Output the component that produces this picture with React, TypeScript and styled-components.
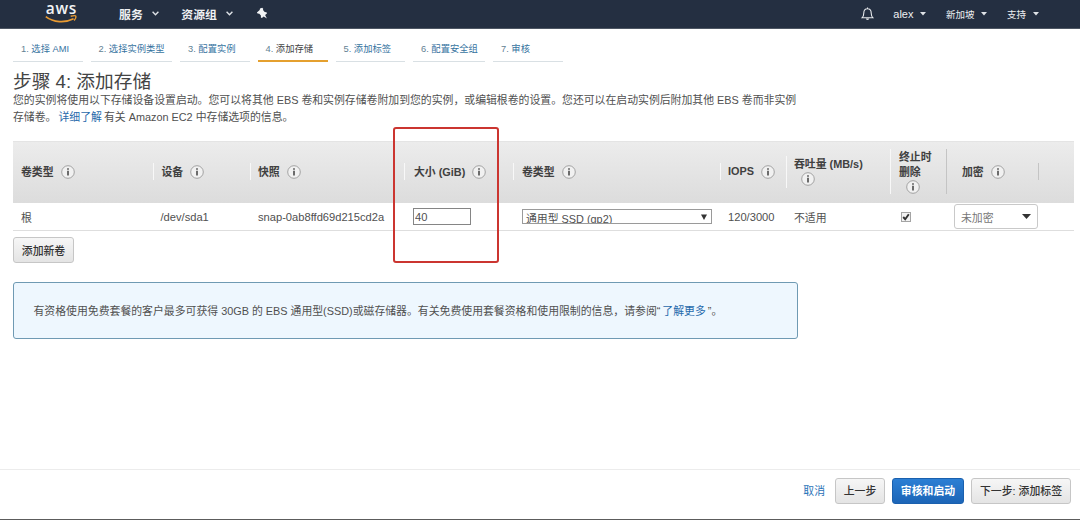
import React from "react";
import styled, { createGlobalStyle, css } from "styled-components";

const GlobalStyle = createGlobalStyle`
  * { box-sizing: border-box; }
  html, body { margin: 0; background: #fff; }
  body {
    font-family: "Liberation Sans", "Noto Sans CJK SC", sans-serif;
    font-size: 10.86px;
    color: #505050;
  }
`;

const Page = styled.div`
  display: flex;
  flex-direction: column;
  width: 1080px;
  height: 520px;
  overflow: hidden;
  border-bottom: 1px solid #5c5c5c;
`;

const TopBar = styled.header`
  display: flex;
  flex: none;
  height: 29px;
  padding: 0 41px 0 45px;
  background: #242f41;
  border-bottom: 1px solid #4d5663;
  color: #eef0f2;
`;

const Logo = styled.svg`
  flex: none;
  width: 34px;
  height: 25px;
  margin-right: 40px;
  overflow: visible;
  font: 600 15.5px "Open Sans", "Noto Sans", sans-serif;
`;

const MainMenu = styled.nav`
  display: flex;
  align-items: center;
  gap: 22px;
  height: 26px;
  font-size: 11.9px;
  font-weight: 700;
`;

const MenuItem = styled.span<{ $gap: number }>`
  display: flex;
  align-items: center;
  gap: ${(p) => p.$gap}px;
  white-space: nowrap;
`;

const AccountMenu = styled.nav`
  display: flex;
  align-items: center;
  gap: 19.5px;
  height: 28px;
  margin-left: auto;
  font-size: 9.5px;
`;

const Latin = styled.span`
  font-size: 11px;
`;

const Steps = styled.nav`
  display: flex;
  flex: none;
  gap: 8px;
  height: 33px;
  padding-left: 13px;
`;

const Step = styled.span<{ $width: number; $active?: boolean }>`
  width: ${(p) => p.$width}px;
  padding: 12px 0 0 8px;
  border-bottom: 1px solid #d9e0e4;
  font-size: 9.3px;
  line-height: 17px;
  color: #37749f;
  white-space: nowrap;
  ${(p) =>
    p.$active &&
    css`
      border-bottom: 2px solid #e5a02f;
      color: #444;
    `}
`;

const StepNumber = styled.span`
  color: #628193;
`;

const Title = styled.h1`
  flex: none;
  height: 30px;
  margin: 0;
  padding: 8px 0 0 13px;
  font-size: 18.7px;
  font-weight: 400;
  line-height: 24px;
  color: #444;
  white-space: nowrap;
`;

const Intro = styled.p`
  flex: none;
  height: 49px;
  margin: 0;
  padding-left: 13px;
  line-height: 16.5px;
  white-space: nowrap;
`;

const Link = styled.a`
  color: #1f69ab;
`;

const IntroLink = styled(Link)`
  margin: 0 -1px;
`;

const Table = styled.section`
  flex: none;
  width: 1061px;
  margin-left: 13px;
`;

const gridColumns = css`
  display: grid;
  grid-template-columns: 139.5px 97px 154.5px 109px 207px 66px 104px 56px 92px 36px;
`;

const HeaderRow = styled.div`
  ${gridColumns}
  align-items: center;
  height: 62px;
  padding-bottom: 2px;
  background: linear-gradient(#ececec, #dcdcdc);
  border-top: 1px solid #e4e4e4;
  font-weight: 700;
  color: #404040;
`;

const HeaderCell = styled.div<{ $height?: number; $inset?: number; $line?: string }>`
  display: flex;
  align-items: center;
  height: ${(p) => p.$height ?? 17}px;
  padding-left: ${(p) => p.$inset ?? 8}px;
  border-left: 1px solid ${(p) => p.$line ?? "#f8f8f8"};
  white-space: nowrap;
`;

const Label = styled.span`
  margin-right: 7px;
  padding-bottom: 1px;
`;

const Stack = styled.div<{ $shift: number }>`
  display: flex;
  flex-direction: column;
  line-height: 15px;
  svg { margin-left: ${(p) => p.$shift}px; }
`;

const BodyRow = styled.div`
  ${gridColumns}
  height: 28px;
  border-bottom: 1px solid #dedede;
`;

const Cell = styled.div<{ $inset?: number }>`
  display: flex;
  align-items: center;
  padding-left: ${(p) => p.$inset ?? 8}px;
  white-space: nowrap;
`;

const CellText = styled.span`
  font-size: 11.15px;
`;

const SizeInput = styled.input`
  width: 58px;
  height: 17px;
  padding: 0 1px;
  border: 1px solid #858585;
  border-radius: 0;
  font: inherit;
  font-size: 11.15px;
  color: #505050;
  background: #fff;
`;

const TypeSelect = styled.div`
  display: flex;
  justify-content: space-between;
  width: 190px;
  height: 15.5px;
  padding: 0 4px 0 3px;
  border: 1px solid #9a9a9a;
  line-height: 19px;
  overflow: hidden;
`;

const TypeArrow = styled.svg`
  margin-top: 4px;
`;

const EncryptSelect = styled.div`
  display: flex;
  align-items: center;
  justify-content: space-between;
  width: 85px;
  height: 25px;
  padding: 0 6px 0 6px;
  border: 1px solid #c9c9c9;
  border-radius: 3px;
  color: #777;
  background: #fff;
`;

const Button = styled.button<{ $width: number; $primary?: boolean }>`
  width: ${(p) => p.$width}px;
  height: 26px;
  padding: 0 0 1px;
  border: 1px solid #c6c6c6;
  border-radius: 3px;
  background: linear-gradient(#f6f6f6, #e4e4e4);
  font: inherit;
  font-weight: 500;
  color: #333;
  white-space: nowrap;
  ${(p) =>
    p.$primary &&
    css`
      border-color: #1a60ae;
      background: linear-gradient(#2c7fd4, #1c65b7);
      font-weight: 700;
      color: #fff;
    `}
`;

const AddVolume = styled.div`
  flex: none;
  padding: 6px 0 0 13px;
`;

const Notice = styled.aside`
  display: flex;
  flex: none;
  align-items: center;
  width: 785px;
  height: 57px;
  margin: 19px 0 0 13px;
  padding: 0 0 1px 19.5px;
  border: 1px solid #6f9ab3;
  border-radius: 3px;
  background: #eef7fe;
  white-space: pre;
`;

const QuotedLink = styled(Link)`
  margin: 0 2px 0 2px;
`;

const Footer = styled.footer`
  display: flex;
  align-items: center;
  justify-content: flex-end;
  gap: 7px;
  height: 50px;
  margin-top: auto;
  padding: 0 9px 8px 0;
  border-top: 1px solid #ececec;
`;

const Cancel = styled(Link)`
  margin-right: 3px;
  padding-bottom: 1px;
  color: #2a73b8;
`;

const HighlightFrame = styled.div`
  position: absolute;
  left: 393px;
  top: 127px;
  width: 106px;
  height: 136px;
  border: 2px solid #cb3530;
  border-radius: 3px;
`;

const Chevron = () => (
  <svg width="7" height="5" viewBox="0 0 7 5" fill="none" stroke="#dfe3e7" strokeWidth="1.4">
    <path d="M.6.8 3.5 3.7 6.4.8" />
  </svg>
);

const Caret = ({ width = 6, height = 3.5, color = "#dfe3e7" }) => (
  <svg width={width} height={height} viewBox="0 0 10 5" preserveAspectRatio="none" fill={color}>
    <path d="M0 0h10L5 5z" />
  </svg>
);

const Info = () => (
  <svg width="14" height="14" viewBox="0 0 14 14" fill="none">
    <circle cx="7" cy="7" r="6.3" fill="#f1f1f1" stroke="#909090" strokeWidth=".8" />
    <path d="M7 3.3v1.4M7 5.7v4.7" stroke="#333" strokeWidth="1.4" />
  </svg>
);

const steps = [
  { name: "选择 AMI", width: 69.5 },
  { name: "选择实例类型", width: 81.5 },
  { name: "配置实例", width: 69.5 },
  { name: "添加存储", width: 70, active: true },
  { name: "添加标签", width: 69.5 },
  { name: "配置安全组", width: 72 },
  { name: "审核", width: 70 },
];

export default function App() {
  return (
    <Page>
      <GlobalStyle />
      <TopBar>
        <Logo viewBox="0 0 34 25" fill="none" stroke="#e89a32">
          <text x=".8" y="13.5" textLength="30.5" fill="#f1f3f5" stroke="none">aws</text>
          <path d="M.8 16.6C8.5 22.6 20 23.2 28.6 18.8" strokeWidth="1.7" />
          <path d="M25.7 16.3c3-.8 5-.6 5.2 0 .2.7-.5 2.9-1.7 4.2" strokeWidth="1.4" />
        </Logo>
        <MainMenu>
          <MenuItem $gap={9.5}>服务<Chevron /></MenuItem>
          <MenuItem $gap={9.5}>资源组<Chevron /></MenuItem>
          <svg width="14" height="13" viewBox="0 0 14 13" fill="#f1f3f5">
            <path d="M5 1.5 7.200.8l1 .9-.2 1.400 1.700 1.900 1.700.2.700 1.100-2 1.800 1.800 3.400-3.200-2-1.800 1.600-1-.6V8.600L4.300 6.700l-1.700-.2-.7-1.100L4.700 3z" />
          </svg>
        </MainMenu>
        <AccountMenu>
          <svg width="13" height="14" viewBox="0 0 13 14" fill="none" stroke="#e6e9ec" strokeWidth="1.1">
            <path d="M6.5.5v1.3M1 10.8c1.5-1.3 1.8-2.3 1.8-4.8 0-2.7 1.4-4.2 3.7-4.2s3.7 1.5 3.7 4.2c0 2.5.3 3.5 1.8 4.8z" />
            <path d="M4.9 11.5c.1 1 .7 1.4 1.6 1.4s1.5-.4 1.6-1.4z" fill="#e6e9ec" stroke="none" />
          </svg>
          <MenuItem $gap={7}><Latin>alex</Latin><Caret /></MenuItem>
          <MenuItem $gap={7}>新加坡<Caret /></MenuItem>
          <MenuItem $gap={7}>支持<Caret /></MenuItem>
        </AccountMenu>
      </TopBar>
      <Steps>
        {steps.map((step, i) => (
          <Step key={step.name} $width={step.width} $active={step.active}>
            <StepNumber>{i + 1}.</StepNumber> {step.name}
          </Step>
        ))}
      </Steps>
      <Title>步骤 4: 添加存储</Title>
      <Intro>
        您的实例将使用以下存储设备设置启动。您可以将其他 EBS 卷和实例存储卷附加到您的实例，或编辑根卷的设置。您还可以在启动实例后附加其他 EBS 卷而非实例
        <br />
        存储卷。 <IntroLink>详细了解</IntroLink> 有关 Amazon EC2 中存储选项的信息。
      </Intro>
      <Table>
        <HeaderRow>
          <HeaderCell $line="transparent" $inset={7}><Label>卷类型</Label><Info /></HeaderCell>
          <HeaderCell><Label>设备</Label><Info /></HeaderCell>
          <HeaderCell $inset={7.5}><Label>快照</Label><Info /></HeaderCell>
          <HeaderCell $inset={9}><Label>大小 (GiB)</Label><Info /></HeaderCell>
          <HeaderCell><Label>卷类型</Label><Info /></HeaderCell>
          <HeaderCell $inset={7}><Label>IOPS</Label><Info /></HeaderCell>
          <HeaderCell $height={32} $inset={7}>
            <Stack $shift={7}>吞吐量 (MB/s)<Info /></Stack>
          </HeaderCell>
          <HeaderCell $height={45}>
            <Stack $shift={7}><span>终止时</span><span>删除</span><Info /></Stack>
          </HeaderCell>
          <HeaderCell $height={45} $inset={15} $line="#c4c4c4"><Label>加密</Label><Info /></HeaderCell>
          <HeaderCell $line="#c4c4c4" />
        </HeaderRow>
        <BodyRow>
          <Cell>根</Cell>
          <Cell><CellText>/dev/sda1</CellText></Cell>
          <Cell $inset={8.5}><CellText>snap-0ab8ffd69d215cd2a</CellText></Cell>
          <Cell $inset={9}><SizeInput defaultValue="40" /></Cell>
          <Cell $inset={9}>
            <TypeSelect>
              通用型 SSD (gp2)
              <TypeArrow width="6" height="6" viewBox="0 0 6 6" fill="#333">
                <path d="M0 .5h6L3 6z" />
              </TypeArrow>
            </TypeSelect>
          </Cell>
          <Cell><CellText>120/3000</CellText></Cell>
          <Cell>不适用</Cell>
          <Cell $inset={11}>
            <svg width="10" height="10" viewBox="0 0 10 10" fill="none">
              <rect x=".5" y=".5" width="9" height="9" fill="#f3f3f3" stroke="#a4a4a4" />
              <path d="m2.2 5 2 2.2 3.6-5" stroke="#333" strokeWidth="1.9" />
            </svg>
          </Cell>
          <Cell>
            <EncryptSelect>未加密<Caret width={9} height={5} color="#333" /></EncryptSelect>
          </Cell>
          <Cell />
        </BodyRow>
      </Table>
      <AddVolume><Button $width={61}>添加新卷</Button></AddVolume>
      <Notice>
        有资格使用免费套餐的客户最多可获得 30GB 的 EBS 通用型(SSD)或磁存储器。有关免费使用套餐资格和使用限制的信息，请参阅“<QuotedLink>了解更多</QuotedLink>”。
      </Notice>
      <Footer>
        <Cancel>取消</Cancel>
        <Button $width={50}>上一步</Button>
        <Button $width={72} $primary>审核和启动</Button>
        <Button $width={100}>下一步: 添加标签</Button>
      </Footer>
      <HighlightFrame />
    </Page>
  );
}
